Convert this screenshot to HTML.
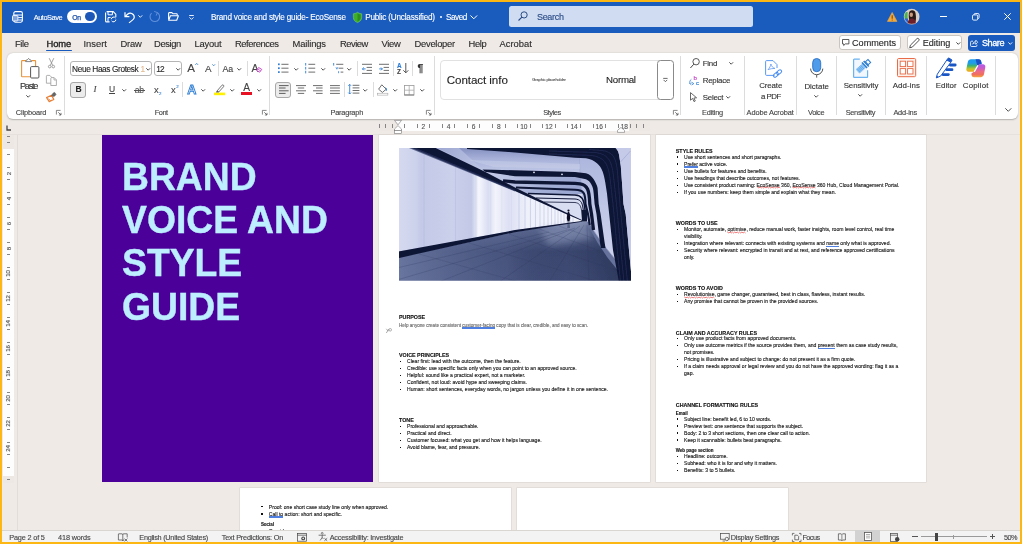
<!DOCTYPE html>
<html><head><meta charset="utf-8"><title>Word</title>
<style>
*{box-sizing:border-box;margin:0;padding:0}
html,body{width:1022px;height:544px;overflow:hidden;background:#FDB714;font-family:"Liberation Sans",sans-serif;color:#262626}
.a{position:absolute}
.t{position:absolute;white-space:pre;line-height:1;-webkit-text-stroke:0.120px}
svg{position:absolute;overflow:visible}
</style></head><body><div id="root" style="position:absolute;left:0;top:0;width:1022px;height:544px;will-change:transform">
<div class="a" style="left:2.00px;top:2.00px;width:1018.00px;height:540.00px;background:#EFEAE6;"></div>
<div class="a" style="left:2.00px;top:2.00px;width:1018.00px;height:30.70px;background:#1A5BBE;"></div>
<svg style="left:12.00px;top:10.50px;" width="11" height="12" viewBox="0 0 11 12"><rect x="1.8" y="0.6" width="8.6" height="10.6" rx="1.6" fill="none" stroke="#fff" stroke-width="1.1"/><path d="M2 4h8.4M6.2 6.6h4.2M6.2 9h4.2" stroke="#fff" stroke-width="1"/><rect x="0.5" y="4.6" width="5.4" height="5.400" rx="0.8" fill="#7FA3DD" stroke="#fff" stroke-width="0.900"/></svg>
<div class="t" style="left:33.70px;top:14.00px;font-size:7.40px;color:#fff;letter-spacing:-0.449px;">AutoSave</div>
<div class="a" style="left:67.00px;top:10.20px;width:30.00px;height:13.00px;background:#fff;border-radius:6.5px;"></div>
<div class="t" style="left:72.30px;top:15.00px;font-size:6.80px;color:#1A4FA8;letter-spacing:-0.436px;-webkit-text-stroke:0.250px #1A4FA8;">On</div>
<div class="a" style="left:85.30px;top:12.00px;width:9.40px;height:9.40px;background:#1D58B8;border-radius:50%;"></div>
<svg style="left:105.00px;top:11.00px;" width="11.5" height="11.5" viewBox="0 0 11.5 11.5"><path d="M1.6 0.6h6.6l2.6 2.6v3M0.6 1.6v8.3a1 1 0 0 0 1 1h3" fill="none" stroke="#fff" stroke-width="1.1"/><path d="M3 0.8v3h4.4v-3M3 10.6v-4h2.6" fill="none" stroke="#fff" stroke-width="1"/><path d="M6.3 8.2a2.4 2.4 0 0 1 4.3-1.2M10.9 8.6a2.4 2.4 0 0 1-4.3 1.3" fill="none" stroke="#fff" stroke-width="1"/></svg>
<svg style="left:124.00px;top:10.50px;" width="12" height="12" viewBox="0 0 12 12"><path d="M1 1.2v4.4h4.4" fill="none" stroke="#fff" stroke-width="1.2"/><path d="M1.4 5.2 3.6 3.2a4 4 0 0 1 6.6 3.6c-.4 1.8-2.6 3-5.2 5" fill="none" stroke="#fff" stroke-width="1.2"/></svg>
<svg style="left:138.40px;top:15.20px;" width="4.6" height="3" viewBox="0 0 4.6 3"><path d="M0.4 0.4l1.9 1.9 1.9-1.9" fill="none" stroke="#fff" stroke-width="0.9"/></svg>
<svg style="left:149.00px;top:10.80px;" width="11.5" height="11.5" viewBox="0 0 11.5 11.5"><path d="M8.2 1.6a4.8 4.8 0 1 1-5.6.6" fill="none" stroke="#5f8fda" stroke-width="1.1"/><path d="M5.2 0.4l3.2 1.2-1.2 3" fill="none" stroke="#5f8fda" stroke-width="1"/></svg>
<svg style="left:168.00px;top:12.20px;" width="11" height="9" viewBox="0 0 11 9"><path d="M0.6 7.6v-6.4a.6.6 0 0 1 .6-.6h2.6l1.2 1.2h3.6a.6.6 0 0 1 .6.6v1.2" fill="none" stroke="#fff" stroke-width="1.1"/><path d="M0.7 8.2l1.7-4.4h8l-1.7 4.4z" fill="none" stroke="#fff" stroke-width="1.1" stroke-linejoin="round"/></svg>
<svg style="left:188.60px;top:14.60px;" width="5" height="5" viewBox="0 0 5 5"><path d="M0.2 0.5h4.6" stroke="#fff" stroke-width="0.9"/><path d="M0.5 2.4l2 2 2-2" fill="none" stroke="#fff" stroke-width="0.9"/></svg>
<div class="t" style="left:211.00px;top:14.00px;font-size:8.20px;color:#fff;letter-spacing:-0.220px;">Brand voice and style guide- EcoSense</div>
<svg style="left:352.60px;top:11.80px;" width="9" height="10.8" viewBox="0 0 9 10.8"><path d="M4.5 0.3c1.3 1 2.7 1.4 4.2 1.5v3.6c0 2.6-1.8 4.3-4.2 5.2C2.1 9.700.3 8 .3 5.400V1.8C1.8 1.700 3.200 1.300 4.500.3z" fill="#3FAE2A" stroke="#7ED66B" stroke-width="0.5"/><path d="M4.5 1.6c1 .7 2 1 3.100 1.100v2.800c0 1.900-1.300 3.200-3.100 3.900z" fill="#2E8F1E"/></svg>
<div class="t" style="left:365.20px;top:14.00px;font-size:8.20px;color:#fff;letter-spacing:-0.213px;">Public (Unclassified)</div>
<div class="a" style="left:439.80px;top:16.20px;width:2.00px;height:2.00px;background:#fff;border-radius:50%;"></div>
<div class="t" style="left:446.00px;top:14.00px;font-size:8.20px;color:#fff;letter-spacing:-0.450px;">Saved</div>
<svg style="left:470.00px;top:14.60px;" width="7.6" height="4.6" viewBox="0 0 7.6 4.6"><path d="M0.5 0.5l3.300 3.300 3.300-3.300" fill="none" stroke="#fff" stroke-width="1"/></svg>
<div class="a" style="left:509.00px;top:6.00px;width:244.40px;height:20.80px;background:#CFDCF1;border-radius:2.500px;"></div>
<svg style="left:517.50px;top:11.40px;" width="10" height="10" viewBox="0 0 10 10"><circle cx="6.100" cy="3.900" r="3.100" fill="none" stroke="#2B4C86" stroke-width="1"/><path d="M3.900 6.100L0.500 9.500" stroke="#2B4C86" stroke-width="1.100"/></svg>
<div class="t" style="left:537.00px;top:13.00px;font-size:9.00px;color:#2B4C86;letter-spacing:-0.319px;">Search</div>
<svg style="left:887.00px;top:12.00px;" width="10.4" height="9.8" viewBox="0 0 10.4 9.8"><path d="M5.200.4L10 9.400H0.400z" fill="#F2A93B" stroke="#F2A93B" stroke-width="0.600" stroke-linejoin="round"/><path d="M5.200 3.200v3.600" stroke="#7a4a12" stroke-width="1.100"/><circle cx="5.200" cy="8" r="0.600" fill="#7a4a12"/></svg>
<svg style="left:904.00px;top:9.00px;" width="15.4" height="15.4" viewBox="0 0 15.4 15.4"><defs><clipPath id="av"><circle cx="7.700" cy="7.700" r="7.700"/></clipPath></defs><g clip-path="url(#av)"><rect width="15.400" height="15.400" fill="#D9CDBF"/><rect x="0" y="3" width="3.600" height="7" fill="#4CAF50"/><rect x="0" y="9.500" width="4" height="6" fill="#2E62C9"/><path d="M5.500 2.500c2-2 5.500-1.500 6 1.500c.4 2.500.8 5 .2 8l-3.500 1l-3-2c-.5-3-.8-6.500.3-8.500z" fill="#2a1a17"/><ellipse cx="7.300" cy="5.800" rx="1.700" ry="2.200" fill="#C99A7C"/><path d="M3.500 15.400c0-4 2-6 4.300-6s4.500 2 4.500 6z" fill="#6B1F2A"/></g><circle cx="7.700" cy="7.700" r="7.500" fill="none" stroke="#E9E2DA" stroke-width="0.500"/></svg>
<div class="a" style="left:940.00px;top:16.00px;width:7.20px;height:1.00px;background:#fff;"></div>
<svg style="left:972.00px;top:13.00px;" width="7.6" height="7.6" viewBox="0 0 7.6 7.6"><rect x="0.500" y="1.900" width="5.200" height="5.200" rx="1.200" fill="none" stroke="#fff" stroke-width="0.900"/><path d="M2 1.900v-.2a1.200 1.200 0 0 1 1.200-1.200h2.700a1.200 1.200 0 0 1 1.200 1.200v2.700a1.200 1.200 0 0 1-1.200 1.200h-.2" fill="none" stroke="#fff" stroke-width="0.900"/></svg>
<svg style="left:1004.00px;top:13.20px;" width="7" height="7" viewBox="0 0 7 7"><path d="M0.300.3l6.400 6.400M6.700.3L.3 6.700" stroke="#fff" stroke-width="1"/></svg>
<div class="t" style="left:15.00px;top:39.00px;font-size:9.40px;color:#2b2b2b;letter-spacing:-0.412px;">File</div>
<div class="t" style="left:83.50px;top:39.00px;font-size:9.40px;color:#2b2b2b;letter-spacing:-0.002px;">Insert</div>
<div class="t" style="left:120.50px;top:39.00px;font-size:9.40px;color:#2b2b2b;letter-spacing:-0.234px;">Draw</div>
<div class="t" style="left:154.00px;top:39.00px;font-size:9.40px;color:#2b2b2b;letter-spacing:-0.377px;">Design</div>
<div class="t" style="left:194.50px;top:39.00px;font-size:9.40px;color:#2b2b2b;letter-spacing:-0.204px;">Layout</div>
<div class="t" style="left:235.00px;top:39.00px;font-size:9.40px;color:#2b2b2b;letter-spacing:-0.457px;">References</div>
<div class="t" style="left:292.50px;top:39.00px;font-size:9.40px;color:#2b2b2b;letter-spacing:-0.122px;">Mailings</div>
<div class="t" style="left:340.00px;top:39.00px;font-size:9.40px;color:#2b2b2b;letter-spacing:-0.470px;">Review</div>
<div class="t" style="left:381.50px;top:39.00px;font-size:9.40px;color:#2b2b2b;letter-spacing:-0.301px;">View</div>
<div class="t" style="left:414.50px;top:39.00px;font-size:9.40px;color:#2b2b2b;letter-spacing:-0.261px;">Developer</div>
<div class="t" style="left:468.50px;top:39.00px;font-size:9.40px;color:#2b2b2b;letter-spacing:-0.333px;">Help</div>
<div class="t" style="left:499.50px;top:39.00px;font-size:9.40px;color:#2b2b2b;letter-spacing:0.015px;">Acrobat</div>
<div class="t" style="left:46.60px;top:39.00px;font-size:9.40px;color:#1f1f1f;letter-spacing:-0.119px;-webkit-text-stroke:0.350px #1f1f1f;">Home</div>
<div class="a" style="left:46.00px;top:49.90px;width:26.00px;height:1.50px;background:#185ABD;border-radius:1px;"></div>
<div class="a" style="left:838.50px;top:35.30px;width:62.00px;height:15.20px;background:#fff;border:0.800px solid #c9c5c1;border-radius:3px;"></div>
<svg style="left:842.00px;top:39.00px;" width="7.6" height="7.2" viewBox="0 0 7.6 7.2"><path d="M0.500.5h6.400v4.400h-3.600l-1.600 1.600v-1.600h-1.200z" fill="none" stroke="#333" stroke-width="0.800" stroke-linejoin="round"/></svg>
<div class="t" style="left:852.00px;top:39.00px;font-size:9.10px;color:#262626;letter-spacing:0.001px;">Comments</div>
<div class="a" style="left:906.50px;top:35.30px;width:55.00px;height:15.20px;background:#fff;border:0.800px solid #c9c5c1;border-radius:3px;"></div>
<svg style="left:909.40px;top:38.00px;" width="10.5" height="10" viewBox="0 0 10.5 10"><path d="M7.800.8a1.300 1.300 0 0 1 1.900 1.900l-6.400 6.400-2.600.700.700-2.600z" fill="none" stroke="#333" stroke-width="0.850" stroke-linejoin="round"/></svg>
<div class="t" style="left:922.80px;top:39.00px;font-size:9.10px;color:#262626;letter-spacing:-0.032px;">Editing</div>
<svg style="left:955.50px;top:41.60px;" width="4.6" height="3" viewBox="0 0 4.6 3"><path d="M0.400.4l1.900 1.900 1.900-1.900" fill="none" stroke="#333" stroke-width="0.900"/></svg>
<div class="a" style="left:967.50px;top:35.10px;width:47.50px;height:15.50px;background:#185ABD;border-radius:3px;"></div>
<svg style="left:970.40px;top:38.60px;" width="8" height="8" viewBox="0 0 8 8"><path d="M3 2.200h-1.400a1 1 0 0 0-1 1v3.300a1 1 0 0 0 1 1h4.300a1 1 0 0 0 1-1v-.800" fill="none" stroke="#fff" stroke-width="0.850"/><path d="M2.800 5.200c.2-1.700 1.200-2.600 3-2.600v-1.500l1.900 2.100-1.900 2.100v-1.400c-1.300-.100-2.200.300-3 1.300z" fill="none" stroke="#fff" stroke-width="0.750" stroke-linejoin="round"/></svg>
<div class="t" style="left:982.00px;top:39.00px;font-size:9.10px;color:#fff;letter-spacing:-0.457px;-webkit-text-stroke:0.300px #fff;">Share</div>
<svg style="left:1008.40px;top:41.60px;" width="4.6" height="3" viewBox="0 0 4.6 3"><path d="M0.400.4l1.900 1.900 1.900-1.900" fill="none" stroke="#fff" stroke-width="0.900"/></svg>
<div class="a" style="left:7.00px;top:52.80px;width:1010.60px;height:66.00px;background:#fff;border-radius:6px;box-shadow:0 0.500px 1.500px rgba(0,0,0,.25);"></div>
<svg style="left:21.00px;top:58.00px;" width="19" height="21" viewBox="0 0 19 21"><path d="M5 2.600H1.200a.6.600 0 0 0-.600.600V18.200a.600.600 0 0 0 .600.600H9" fill="none" stroke="#E8953A" stroke-width="1.100"/><path d="M10.400 2.600H14a.600.600 0 0 1 .600.600V8" fill="none" stroke="#E8953A" stroke-width="1.100"/><path d="M4.600 3.600L5.600 1.800H6.400L7.600.400L8.800 1.800H9.600L10.600 3.600z" fill="#fff" stroke="#666" stroke-width="0.800" stroke-linejoin="round"/><rect x="9.600" y="8.600" width="8.300" height="11.400" rx="1" fill="#fff" stroke="#555" stroke-width="1"/></svg>
<div class="t" style="left:19.90px;top:82.00px;font-size:9.20px;color:#333;letter-spacing:-1.225px;">Paste</div>
<svg style="left:25.80px;top:95.00px;" width="4.4" height="2.2" viewBox="0 0 4.4 2.2"><path d="M0.300 0.300L2.2 2.2L4.1 0.300" fill="none" stroke="#444" stroke-width="0.950"/></svg>
<svg style="left:48.00px;top:58.20px;" width="7" height="10.4" viewBox="0 0 7 10.4"><path d="M1.200.2L4.600 7.200M5.800.2L2.400 7.200" stroke="#8a8a8a" stroke-width="0.800" fill="none"/><circle cx="1.700" cy="8.600" r="1.300" fill="none" stroke="#8a8a8a" stroke-width="0.800"/><circle cx="5.300" cy="8.600" r="1.300" fill="none" stroke="#8a8a8a" stroke-width="0.800"/></svg>
<svg style="left:45.90px;top:74.60px;" width="11" height="11" viewBox="0 0 11 11"><path d="M0.400 8.200V1.200a.800.800 0 0 1 .800-.800H3.800L5.600 2.200V8.200z" fill="#fff" stroke="#9a9a9a" stroke-width="0.800"/><path d="M4.800 10.500V3.400a.800.800 0 0 1 .800-.800H8.200L10.400 4.800V10.500z" fill="#fff" stroke="#9a9a9a" stroke-width="0.800"/><path d="M8 2.800V5h2.200" fill="none" stroke="#9a9a9a" stroke-width="0.700"/></svg>
<svg style="left:46.30px;top:91.70px;" width="10.5" height="10" viewBox="0 0 10.5 10"><path d="M0.600 5.600L5.400 3.200L7.800 7.400L3.200 9.600z" fill="#fff" stroke="#E8813A" stroke-width="1.200" stroke-linejoin="round"/><path d="M2.400 6.800l2.400 2" stroke="#E8813A" stroke-width="0.900"/><path d="M5.600 3.600L7 1.200L8.600.400L10 2.400L9 3.800L7.600 4.600z" fill="#666" stroke="#555" stroke-width="0.600"/></svg>
<div class="t" style="left:15.80px;top:109.00px;font-size:7.40px;color:#444;letter-spacing:-0.130px;">Clipboard</div>
<svg style="left:56.40px;top:110.20px;" width="5.6" height="5.2" viewBox="0 0 5.6 5.2"><path d="M0.400 4.600V0.400H4.600" fill="none" stroke="#555" stroke-width="0.700"/><path d="M2.300 2.300L5 5M5 5V2.900M5 5H2.900" fill="none" stroke="#555" stroke-width="0.800"/></svg>
<div class="a" style="left:64.10px;top:56.00px;width:0.70px;height:59.00px;background:#dcdcdc;"></div>
<div class="a" style="left:69.90px;top:60.50px;width:82.30px;height:15.90px;background:#fff;border:0.800px solid #b5b5b5;border-radius:3px;"></div>
<div class="t" style="left:72.10px;top:65.00px;font-size:8.30px;color:#262626;letter-spacing:-0.388px;">Neue Haas Grotesk</div>
<div class="t" style="left:140.60px;top:65.00px;font-size:8.30px;color:#e3b98f;">1</div>
<svg style="left:146.30px;top:67.60px;" width="4.4" height="2.2" viewBox="0 0 4.4 2.2"><path d="M0.300 0.300L2.2 2.2L4.1 0.300" fill="none" stroke="#444" stroke-width="0.950"/></svg>
<div class="a" style="left:154.20px;top:60.50px;width:28.10px;height:15.90px;background:#fff;border:0.800px solid #b5b5b5;border-radius:3px;"></div>
<div class="t" style="left:156.20px;top:65.00px;font-size:8.30px;color:#262626;letter-spacing:-0.916px;">12</div>
<svg style="left:176.40px;top:67.60px;" width="4.4" height="2.2" viewBox="0 0 4.4 2.2"><path d="M0.300 0.300L2.2 2.2L4.1 0.300" fill="none" stroke="#444" stroke-width="0.950"/></svg>
<div class="t" style="left:187.30px;top:62.00px;font-size:11.60px;color:#444;">A</div>
<svg style="left:195.30px;top:63.40px;" width="3.4" height="2.2" viewBox="0 0 3.4 2.2"><path d="M0.300 1.900L1.700.400L3.100 1.900" fill="none" stroke="#2B7CD3" stroke-width="0.800"/></svg>
<div class="t" style="left:205.00px;top:64.00px;font-size:9.80px;color:#444;">A</div>
<svg style="left:212.30px;top:64.40px;" width="3.4" height="2.2" viewBox="0 0 3.4 2.2"><path d="M0.300.300L1.700 1.800L3.100.300" fill="none" stroke="#2B7CD3" stroke-width="0.800"/></svg>
<div class="a" style="left:218.10px;top:61.00px;width:0.70px;height:15.00px;background:#dcdcdc;"></div>
<div class="t" style="left:222.50px;top:65.00px;font-size:8.80px;color:#444;letter-spacing:-0.132px;">Aa</div>
<svg style="left:236.70px;top:67.60px;" width="4.4" height="2.2" viewBox="0 0 4.4 2.2"><path d="M0.300 0.300L2.2 2.2L4.1 0.300" fill="none" stroke="#444" stroke-width="0.950"/></svg>
<div class="a" style="left:247.10px;top:61.00px;width:0.70px;height:15.00px;background:#dcdcdc;"></div>
<div class="t" style="left:251.60px;top:63.00px;font-size:10.60px;color:#444;">A</div>
<svg style="left:256.20px;top:66.50px;" width="6.4" height="5.6" viewBox="0 0 6.4 5.6"><path d="M2.600.500L5.800 2.400L3.600 5.200L.600 3.400z" fill="#fff" stroke="#C43BC4" stroke-width="0.900" stroke-linejoin="round"/><path d="M1.600 2L4.600 3.800" stroke="#C43BC4" stroke-width="0.700"/></svg>
<div class="a" style="left:69.90px;top:81.50px;width:16.20px;height:16.10px;background:#ECECEC;border:0.800px solid #a8a8a8;border-radius:3px;"></div>
<div class="t" style="left:75.60px;top:85.00px;font-size:8.50px;color:#222;font-weight:bold;">B</div>
<div class="t" style="left:93.40px;top:85.00px;font-size:9.00px;color:#444;font-style:italic;font-family:'Liberation Serif',serif;">I</div>
<div class="t" style="left:108.90px;top:85.00px;font-size:8.50px;color:#444;">U</div>
<div class="a" style="left:108.70px;top:93.00px;width:6.30px;height:0.80px;background:#444;"></div>
<svg style="left:121.80px;top:88.60px;" width="4.4" height="2.2" viewBox="0 0 4.4 2.2"><path d="M0.300 0.300L2.2 2.2L4.1 0.300" fill="none" stroke="#444" stroke-width="0.950"/></svg>
<div class="t" style="left:134.80px;top:86.00px;font-size:8.60px;color:#555;letter-spacing:-0.283px;">ab</div>
<div class="a" style="left:133.80px;top:90.00px;width:10.80px;height:0.80px;background:#555;"></div>
<div class="t" style="left:154.00px;top:85.00px;font-size:9.40px;color:#444;">x</div>
<div class="t" style="left:159.00px;top:92.00px;font-size:4.40px;color:#2B7CD3;">2</div>
<div class="t" style="left:171.00px;top:85.00px;font-size:9.40px;color:#444;">x</div>
<div class="t" style="left:176.20px;top:85.00px;font-size:4.40px;color:#2B7CD3;">2</div>
<div class="a" style="left:182.40px;top:82.40px;width:0.70px;height:14.80px;background:#dcdcdc;"></div>
<div class="t" style="left:187.20px;top:84.00px;font-size:12.60px;color:#fff;font-weight:bold;-webkit-text-stroke:0.850px #2B7CD3;">A</div>
<svg style="left:201.10px;top:88.60px;" width="4.4" height="2.2" viewBox="0 0 4.4 2.2"><path d="M0.300 0.300L2.2 2.2L4.1 0.300" fill="none" stroke="#444" stroke-width="0.950"/></svg>
<svg style="left:214.00px;top:83.50px;" width="11.4" height="11.4" viewBox="0 0 11.4 11.4"><rect x="0" y="8.600" width="11.200" height="2.600" fill="#FFF100"/><path d="M3.200 6.800L8 1.200a1.100 1.100 0 0 1 1.600 1.500L4.800 8z" fill="#fff" stroke="#555" stroke-width="0.800" stroke-linejoin="round"/><path d="M3.200 6.800L2.400 8.200L4.800 8" fill="#555" stroke="#555" stroke-width="0.600"/></svg>
<svg style="left:229.80px;top:88.60px;" width="4.4" height="2.2" viewBox="0 0 4.4 2.2"><path d="M0.300 0.300L2.2 2.2L4.1 0.300" fill="none" stroke="#444" stroke-width="0.950"/></svg>
<div class="t" style="left:243.20px;top:83.00px;font-size:10.20px;color:#444;">A</div>
<div class="a" style="left:241.00px;top:92.10px;width:11.00px;height:2.60px;background:#E81123;"></div>
<svg style="left:256.80px;top:88.60px;" width="4.4" height="2.2" viewBox="0 0 4.4 2.2"><path d="M0.300 0.300L2.2 2.2L4.1 0.300" fill="none" stroke="#444" stroke-width="0.950"/></svg>
<div class="t" style="left:154.70px;top:109.00px;font-size:7.40px;color:#444;letter-spacing:-0.452px;">Font</div>
<svg style="left:262.20px;top:110.20px;" width="5.6" height="5.2" viewBox="0 0 5.6 5.2"><path d="M0.400 4.600V0.400H4.600" fill="none" stroke="#555" stroke-width="0.700"/><path d="M2.300 2.300L5 5M5 5V2.900M5 5H2.900" fill="none" stroke="#555" stroke-width="0.800"/></svg>
<div class="a" style="left:269.20px;top:56.00px;width:0.70px;height:59.00px;background:#dcdcdc;"></div>
<svg style="left:277.80px;top:63.00px;" width="11" height="11" viewBox="0 0 11 11"><rect x="0" y="0.45" width="1.700" height="1.700" fill="#2B7CD3"/><path d="M3.400 1.3H10.500" stroke="#666" stroke-width="0.950"/><rect x="0" y="4.35" width="1.700" height="1.700" fill="#2B7CD3"/><path d="M3.400 5.2H10.500" stroke="#666" stroke-width="0.950"/><rect x="0" y="8.25" width="1.700" height="1.700" fill="#2B7CD3"/><path d="M3.400 9.1H10.500" stroke="#666" stroke-width="0.950"/></svg>
<svg style="left:293.60px;top:67.60px;" width="4.4" height="2.2" viewBox="0 0 4.4 2.2"><path d="M0.300 0.300L2.2 2.2L4.1 0.300" fill="none" stroke="#444" stroke-width="0.950"/></svg>
<svg style="left:305.20px;top:63.00px;" width="11" height="11" viewBox="0 0 11 11"><path d="M0.700 0V2.6" stroke="#2B7CD3" stroke-width="0.900"/><path d="M3.400 1.3H10.200" stroke="#666" stroke-width="0.950"/><path d="M0.700 3.9V6.5" stroke="#2B7CD3" stroke-width="0.900"/><path d="M3.400 5.2H10.200" stroke="#666" stroke-width="0.950"/><path d="M0.700 7.8V10.4" stroke="#2B7CD3" stroke-width="0.900"/><path d="M3.400 9.1H10.200" stroke="#666" stroke-width="0.950"/></svg>
<svg style="left:320.80px;top:67.60px;" width="4.4" height="2.2" viewBox="0 0 4.4 2.2"><path d="M0.300 0.300L2.2 2.2L4.1 0.300" fill="none" stroke="#444" stroke-width="0.950"/></svg>
<svg style="left:332.50px;top:63.00px;" width="11" height="11" viewBox="0 0 11 11"><path d="M0.700 0V2.600" stroke="#2B7CD3" stroke-width="0.900"/><path d="M3.200 1.300H10.300M5.600 5.200H10.300M7.600 9.100H10.300" stroke="#666" stroke-width="0.950"/><path d="M3 4.200l.900 2M4.800 4.200L3.900 6.200" stroke="#2B7CD3" stroke-width="0.700" fill="none"/><path d="M5.600 8.200v2" stroke="#2B7CD3" stroke-width="0.800"/></svg>
<svg style="left:347.10px;top:67.60px;" width="4.4" height="2.2" viewBox="0 0 4.4 2.2"><path d="M0.300 0.300L2.2 2.2L4.1 0.300" fill="none" stroke="#444" stroke-width="0.950"/></svg>
<div class="a" style="left:357.20px;top:61.00px;width:0.70px;height:15.00px;background:#dcdcdc;"></div>
<svg style="left:362.00px;top:63.00px;" width="10" height="11" viewBox="0 0 10 11"><path d="M0 1.300H10M4.600 4.400H10M4.600 7.400H10M0 10.400H10" stroke="#666" stroke-width="0.950" /><path d="M3.600 5.900H0.400M1.800 4.500L.400 5.900L1.800 7.300" stroke="#2B7CD3" stroke-width="0.900" fill="none"/></svg>
<svg style="left:379.10px;top:63.00px;" width="10" height="11" viewBox="0 0 10 11"><path d="M0 1.300H10M4.600 4.400H10M4.600 7.400H10M0 10.400H10" stroke="#666" stroke-width="0.950" /><path d="M0.200 5.900H3.400M2 4.500L3.400 5.900L2 7.300" stroke="#2B7CD3" stroke-width="0.900" fill="none"/></svg>
<div class="a" style="left:393.20px;top:61.00px;width:0.70px;height:15.00px;background:#dcdcdc;"></div>
<div class="t" style="left:396.90px;top:63.00px;font-size:6.40px;color:#2B7CD3;font-weight:bold;">A</div>
<div class="t" style="left:397.10px;top:69.00px;font-size:6.40px;color:#444;font-weight:bold;">Z</div>
<svg style="left:402.60px;top:63.40px;" width="6" height="10.5" viewBox="0 0 6 10.5"><path d="M2.800 0V9.800M0.300 7.300L2.800 9.800L5.300 7.300" fill="none" stroke="#444" stroke-width="0.900"/></svg>
<div class="a" style="left:411.70px;top:61.00px;width:0.70px;height:15.00px;background:#dcdcdc;"></div>
<div class="t" style="left:417.60px;top:63.00px;font-size:10.50px;color:#333;font-weight:bold;">¶</div>
<div class="a" style="left:275.30px;top:81.50px;width:16.20px;height:16.10px;background:#ECECEC;border:0.800px solid #a8a8a8;border-radius:3px;"></div>
<svg style="left:278.70px;top:85.00px;" width="10" height="9" viewBox="0 0 10 9"><path d="M0 .600H9.600M0 3H6.600M0 5.800H9.600M0 8.400H6.600" stroke="#555" stroke-width="0.950"/></svg>
<svg style="left:295.60px;top:85.00px;" width="10" height="9" viewBox="0 0 10 9"><path d="M0 .600H10M1.800 3H8.200M0 5.800H10M1.800 8.400H8.200" stroke="#666" stroke-width="0.950"/></svg>
<svg style="left:312.70px;top:85.00px;" width="10" height="9" viewBox="0 0 10 9"><path d="M0 .600H9.600M3 3H9.600M0 5.800H9.600M3 8.400H9.600" stroke="#666" stroke-width="0.950"/></svg>
<svg style="left:329.80px;top:85.00px;" width="10" height="9" viewBox="0 0 10 9"><path d="M0 .600H9.900M0 3H9.900M0 5.800H9.900M0 8.400H9.900" stroke="#666" stroke-width="0.950"/></svg>
<div class="a" style="left:343.50px;top:82.40px;width:0.70px;height:14.80px;background:#dcdcdc;"></div>
<svg style="left:347.60px;top:84.30px;" width="11.5" height="10.5" viewBox="0 0 11.5 10.5"><path d="M4.600 1.300H11.400M4.600 3.900H11.400M4.600 6.500H11.400M4.600 9.100H11.400" stroke="#666" stroke-width="0.950"/><path d="M1.700.400V10M.300 1.800L1.700.400L3.100 1.800M.300 8.600L1.700 10L3.100 8.600" fill="none" stroke="#2B7CD3" stroke-width="0.850"/></svg>
<svg style="left:362.50px;top:88.60px;" width="4.4" height="2.2" viewBox="0 0 4.4 2.2"><path d="M0.300 0.300L2.2 2.2L4.1 0.300" fill="none" stroke="#444" stroke-width="0.950"/></svg>
<div class="a" style="left:372.70px;top:82.40px;width:0.70px;height:14.80px;background:#dcdcdc;"></div>
<svg style="left:377.00px;top:83.80px;" width="11.5" height="11.5" viewBox="0 0 11.5 11.5"><path d="M4.800.800L9.200 5.200L5.400 8.400L1.600 5.200z" fill="#fff" stroke="#555" stroke-width="0.850" stroke-linejoin="round"/><path d="M8.600 3.600c1 1 1.200 2 .600 3.200" stroke="#2B7CD3" stroke-width="1" fill="none"/><rect x="0.300" y="9.200" width="10.600" height="1.900" fill="#fff" stroke="#999" stroke-width="0.500"/></svg>
<svg style="left:392.60px;top:88.60px;" width="4.4" height="2.2" viewBox="0 0 4.4 2.2"><path d="M0.300 0.300L2.2 2.2L4.1 0.300" fill="none" stroke="#444" stroke-width="0.950"/></svg>
<svg style="left:404.40px;top:84.50px;" width="10.4" height="10.4" viewBox="0 0 10.4 10.4"><rect x="0.400" y="0.400" width="9.600" height="9.600" fill="none" stroke="#999" stroke-width="0.800"/><path d="M5.200.400V10M.400 5.200H10" stroke="#aaa" stroke-width="0.800"/><path d="M0.400 10H10" stroke="#777" stroke-width="0.900"/></svg>
<svg style="left:419.80px;top:88.60px;" width="4.4" height="2.2" viewBox="0 0 4.4 2.2"><path d="M0.300 0.300L2.2 2.2L4.1 0.300" fill="none" stroke="#444" stroke-width="0.950"/></svg>
<div class="t" style="left:330.50px;top:109.00px;font-size:7.40px;color:#444;letter-spacing:-0.218px;">Paragraph</div>
<svg style="left:426.30px;top:110.20px;" width="5.6" height="5.2" viewBox="0 0 5.6 5.2"><path d="M0.400 4.600V0.400H4.600" fill="none" stroke="#555" stroke-width="0.700"/><path d="M2.300 2.300L5 5M5 5V2.900M5 5H2.900" fill="none" stroke="#555" stroke-width="0.800"/></svg>
<div class="a" style="left:434.20px;top:56.00px;width:0.70px;height:59.00px;background:#dcdcdc;"></div>
<div class="a" style="left:440.40px;top:60.20px;width:234.00px;height:40.00px;background:#fff;border:0.800px solid #e1e1e1;border-radius:4px;"></div>
<div class="a" style="left:657.10px;top:60.20px;width:17.00px;height:40.00px;background:#fff;border:0.900px solid #8a8a8a;border-radius:3.500px;"></div>
<div class="t" style="left:446.80px;top:74.00px;font-size:11.60px;color:#1f1f1f;letter-spacing:-0.075px;">Contact info</div>
<div class="t" style="left:532.30px;top:78.00px;font-size:3.90px;color:#555;letter-spacing:-0.069px;">Graphic placeholder</div>
<div class="t" style="left:606.00px;top:75.00px;font-size:9.70px;color:#1f1f1f;letter-spacing:-0.243px;">Normal</div>
<svg style="left:663.00px;top:77.60px;" width="4.8" height="4.2" viewBox="0 0 4.8 4.2"><path d="M0.200.400H4.600" stroke="#444" stroke-width="0.800"/><path d="M0.600 1.900L2.400 3.700L4.200 1.900" fill="none" stroke="#444" stroke-width="0.800"/></svg>
<div class="t" style="left:543.30px;top:109.00px;font-size:7.40px;color:#444;letter-spacing:-0.459px;">Styles</div>
<svg style="left:673.00px;top:110.20px;" width="5.6" height="5.2" viewBox="0 0 5.6 5.2"><path d="M0.400 4.600V0.400H4.600" fill="none" stroke="#555" stroke-width="0.700"/><path d="M2.300 2.300L5 5M5 5V2.900M5 5H2.900" fill="none" stroke="#555" stroke-width="0.800"/></svg>
<div class="a" style="left:680.10px;top:56.00px;width:0.70px;height:59.00px;background:#dcdcdc;"></div>
<svg style="left:689.70px;top:57.50px;" width="10" height="10.5" viewBox="0 0 10 10.5"><circle cx="6.100" cy="3.700" r="3.200" fill="none" stroke="#444" stroke-width="0.900"/><path d="M3.800 6.200L.400 10" stroke="#444" stroke-width="1"/></svg>
<div class="t" style="left:702.70px;top:60.00px;font-size:7.90px;color:#333;letter-spacing:-0.242px;">Find</div>
<svg style="left:729.00px;top:62.30px;" width="4.4" height="2.2" viewBox="0 0 4.4 2.2"><path d="M0.300 0.300L2.2 2.2L4.1 0.300" fill="none" stroke="#444" stroke-width="0.950"/></svg>
<div class="t" style="left:693.40px;top:75.00px;font-size:6.20px;color:#C43BC4;">b</div>
<div class="t" style="left:695.90px;top:80.00px;font-size:6.20px;color:#2B7CD3;">c</div>
<svg style="left:689.00px;top:78.80px;" width="5.5" height="7" viewBox="0 0 5.5 7"><path d="M2.400.300C.800 1.300.300 3 1.300 4.800M.200 4L1.400 5.200L2.600 4M2.600 3.200L4.800 4.600L2.600 6" fill="none" stroke="#2B7CD3" stroke-width="0.800"/></svg>
<div class="t" style="left:702.70px;top:77.00px;font-size:7.90px;color:#333;letter-spacing:-0.226px;">Replace</div>
<svg style="left:690.00px;top:92.00px;" width="7.6" height="10.2" viewBox="0 0 7.6 10.2"><path d="M0.500.600V8.200L2.600 6.400L4 9.600L5.300 9L3.900 6L6.600 5.800z" fill="#fff" stroke="#444" stroke-width="0.800" stroke-linejoin="round"/></svg>
<div class="t" style="left:702.70px;top:94.00px;font-size:7.90px;color:#333;letter-spacing:-0.226px;">Select</div>
<svg style="left:725.90px;top:95.60px;" width="4.4" height="2.2" viewBox="0 0 4.4 2.2"><path d="M0.300 0.300L2.2 2.2L4.1 0.300" fill="none" stroke="#444" stroke-width="0.950"/></svg>
<div class="t" style="left:702.00px;top:109.00px;font-size:7.40px;color:#444;letter-spacing:-0.232px;">Editing</div>
<div class="a" style="left:744.20px;top:56.00px;width:0.70px;height:59.00px;background:#dcdcdc;"></div>
<svg style="left:764.80px;top:60.00px;" width="17" height="18.5" viewBox="0 0 17 18.5"><path d="M9.600 15.400H1.600a1 1 0 0 1-1-1V1.600a1 1 0 0 1 1-1H8L12 4.600V8" fill="none" stroke="#4A8DF0" stroke-width="0.900"/><path d="M3 9.600c1.600-1.600 2.600-3.600 2.900-5.600c.6 2.400 2 3.800 4 4.400c-2.400 0-4.600.400-6.900 1.200z" fill="none" stroke="#4A8DF0" stroke-width="0.700" stroke-linejoin="round"/><g transform="rotate(-40 12.500 13.500)" fill="none" stroke="#4A8DF0" stroke-width="1"><rect x="7.600" y="11.900" width="5.600" height="3.200" rx="1.600"/><rect x="11.800" y="11.900" width="5.600" height="3.200" rx="1.600"/></g></svg>
<div class="t" style="left:759.20px;top:82.00px;font-size:7.90px;color:#333;letter-spacing:-0.119px;">Create</div>
<div class="t" style="left:761.00px;top:93.00px;font-size:7.90px;color:#333;letter-spacing:-0.518px;">a PDF</div>
<div class="t" style="left:746.60px;top:109.00px;font-size:7.40px;color:#444;letter-spacing:-0.111px;">Adobe Acrobat</div>
<div class="a" style="left:796.40px;top:56.00px;width:0.70px;height:59.00px;background:#dcdcdc;"></div>
<svg style="left:810.00px;top:57.60px;" width="14" height="20" viewBox="0 0 14 20"><rect x="2.700" y="0.500" width="8" height="13.200" rx="4" fill="#4F9CEB" stroke="#2B6FC4" stroke-width="0.900"/><path d="M0.600 10.600a6.100 6.100 0 0 0 12.200 0M6.700 16.800V19.600" fill="none" stroke="#555" stroke-width="1"/></svg>
<div class="t" style="left:804.40px;top:83.00px;font-size:7.90px;color:#333;letter-spacing:0.002px;">Dictate</div>
<svg style="left:814.10px;top:95.00px;" width="4.4" height="2.2" viewBox="0 0 4.4 2.2"><path d="M0.300 0.300L2.2 2.2L4.1 0.300" fill="none" stroke="#444" stroke-width="0.950"/></svg>
<div class="t" style="left:808.10px;top:109.00px;font-size:7.40px;color:#444;letter-spacing:-0.421px;">Voice</div>
<div class="a" style="left:836.10px;top:56.00px;width:0.70px;height:59.00px;background:#dcdcdc;"></div>
<svg style="left:853.30px;top:57.50px;" width="18.5" height="20" viewBox="0 0 18.5 20"><path d="M6.800 1.200H1.200a.600.600 0 0 0-.600.600V18.800a.600.600 0 0 0 .600.600H14a.600.600 0 0 0 .600-.600V12.200" fill="#F2F7FD" stroke="#6BB2F0" stroke-width="1.200"/><g transform="rotate(-42 10 8.500)"><rect x="2.600" y="6" width="8.600" height="5.200" fill="#8CC4F4"/><path d="M4.200 6V11.200M5.800 6V11.200M7.400 6V11.200M9 6V11.200" stroke="#4A9BE8" stroke-width="0.600"/><rect x="11.200" y="4.800" width="1.500" height="7.600" fill="#2B7CD3"/><rect x="13.500" y="4.800" width="1.500" height="7.600" fill="#2B7CD3"/><rect x="15" y="6.600" width="3.400" height="4" fill="#fff" stroke="#2B7CD3" stroke-width="1"/></g></svg>
<div class="t" style="left:843.70px;top:82.00px;font-size:7.90px;color:#333;letter-spacing:-0.078px;">Sensitivity</div>
<svg style="left:858.30px;top:94.10px;" width="4.4" height="2.2" viewBox="0 0 4.4 2.2"><path d="M0.300 0.300L2.2 2.2L4.1 0.300" fill="none" stroke="#444" stroke-width="0.950"/></svg>
<div class="t" style="left:845.80px;top:109.00px;font-size:7.40px;color:#444;letter-spacing:-0.356px;">Sensitivity</div>
<div class="a" style="left:885.00px;top:56.00px;width:0.70px;height:59.00px;background:#dcdcdc;"></div>
<svg style="left:896.70px;top:58.20px;" width="19.2" height="19.2" viewBox="0 0 19.2 19.2"><rect x="0.500" y="0.500" width="18.200" height="18.200" rx="1.200" fill="#FDF1EC" stroke="#E86A45" stroke-width="1"/><rect x="3.200" y="3.200" width="5.400" height="5.400" fill="#fff" stroke="#E86A45" stroke-width="0.900"/><rect x="10.600" y="3.200" width="5.400" height="5.400" fill="#fff" stroke="#E86A45" stroke-width="0.900"/><rect x="3.200" y="10.600" width="5.400" height="5.400" fill="#fff" stroke="#E86A45" stroke-width="0.900"/><rect x="10.600" y="10.600" width="5.400" height="5.400" fill="#fff" stroke="#E86A45" stroke-width="0.900"/></svg>
<div class="t" style="left:892.70px;top:82.00px;font-size:7.90px;color:#333;letter-spacing:0.073px;">Add-ins</div>
<div class="t" style="left:893.40px;top:109.00px;font-size:7.40px;color:#444;letter-spacing:-0.213px;">Add-ins</div>
<div class="a" style="left:926.20px;top:56.00px;width:0.70px;height:59.00px;background:#dcdcdc;"></div>
<svg style="left:935.70px;top:57.80px;" width="20.5" height="20" viewBox="0 0 20.5 20"><path d="M14.300 7H19.200M10.700 11.700H16M6.900 16.600H12.400" stroke="#1A56C4" stroke-width="2.800" stroke-linecap="round"/><path d="M0.300 19.900L1.300 16.200L11.900.400L12.900 0L16 2.100L15.600 3.200L4.600 18.100z" fill="#fff" stroke="#1A56C4" stroke-width="1" stroke-linejoin="round"/><path d="M11.900.400L12.900 0L16 2.100L14.400 4.400L10.500 2.400z" fill="#1A56C4"/><path d="M0.300 19.900L0.900 17.600L2.600 18.900z" fill="#1A56C4"/></svg>
<div class="t" style="left:935.70px;top:82.00px;font-size:7.90px;color:#333;letter-spacing:0.060px;">Editor</div>
<svg style="left:965.50px;top:58.70px;" width="19.7" height="18.5" viewBox="0 0 19.7 18.5"><defs><linearGradient id="cpL" x1="0" y1="0" x2="0" y2="1"><stop offset="0" stop-color="#1E9BEA"/><stop offset="0.300" stop-color="#1E9BEA"/><stop offset="0.520" stop-color="#3BB273"/><stop offset="0.780" stop-color="#C9C526"/><stop offset="1" stop-color="#F2A51E"/></linearGradient><linearGradient id="cpR" x1="0" y1="0" x2="0" y2="1"><stop offset="0" stop-color="#B35CEB"/><stop offset="0.300" stop-color="#C95BC6"/><stop offset="0.550" stop-color="#EC6A86"/><stop offset="0.800" stop-color="#F0705A"/><stop offset="1" stop-color="#F4A640"/></linearGradient></defs><path d="M5 .300H12.600C14 .300 14.700 1 15.100 2.200L15.800 4.600L11.600 6.600L8.300 12.700H2.600C1 12.700 0 11.500.400 9.800L1.800 3C2.200 1.200 3.400.300 5 .300z" fill="url(#cpL)"/><path d="M9.600.300H12.600C14 .300 14.700 1 15.100 2.200L15.800 5.200L13.400 5.400L11.400 7z" fill="#1B50C8"/><path d="M13.400 5.300H16.900C18.700 5.300 19.700 6.600 19.300 8.400L18 15.300C17.600 17.100 16.400 18.200 14.700 18.200H8C6.600 18.200 5.900 17.500 5.600 16.300L5.400 14.400L8.600 12.300L11.700 6.500z" fill="url(#cpR)"/><path d="M11.700 6.700L8.500 12.400" stroke="#fff" stroke-width="1.300" stroke-linecap="round"/></svg>
<div class="t" style="left:962.80px;top:82.00px;font-size:7.90px;color:#333;letter-spacing:0.173px;">Copilot</div>
<div class="a" style="left:995.10px;top:56.00px;width:0.70px;height:59.00px;background:#dcdcdc;"></div>
<svg style="left:1005.00px;top:108.20px;" width="6.6" height="3.8" viewBox="0 0 6.6 3.8"><path d="M0.300.300L3.300 3.300L6.300.300" fill="none" stroke="#444" stroke-width="0.950"/></svg>
<div class="a" style="left:379.30px;top:121.00px;width:19.00px;height:10.20px;background:#EDE8E4;"></div>
<div class="a" style="left:398.20px;top:121.00px;width:231.30px;height:10.20px;background:#FDFDFD;"></div>
<div class="a" style="left:629.50px;top:121.00px;width:20.70px;height:10.20px;background:#EDE8E4;"></div>
<div class="a" style="left:379.01px;top:124.40px;width:0.70px;height:3.20px;background:#858585;"></div>
<div class="a" style="left:385.29px;top:124.40px;width:0.70px;height:3.20px;background:#858585;"></div>
<div class="a" style="left:391.57px;top:124.40px;width:0.70px;height:3.20px;background:#858585;"></div>
<div class="a" style="left:404.13px;top:124.40px;width:0.70px;height:3.20px;background:#858585;"></div>
<div class="a" style="left:416.69px;top:124.40px;width:0.70px;height:3.20px;background:#858585;"></div>
<div class="t" style="left:421.52px;top:124.00px;font-size:6.60px;color:#555;">2</div>
<div class="a" style="left:429.25px;top:124.40px;width:0.70px;height:3.20px;background:#858585;"></div>
<div class="a" style="left:441.81px;top:124.40px;width:0.70px;height:3.20px;background:#858585;"></div>
<div class="t" style="left:446.64px;top:124.00px;font-size:6.60px;color:#555;">4</div>
<div class="a" style="left:454.37px;top:124.40px;width:0.70px;height:3.20px;background:#858585;"></div>
<div class="a" style="left:466.93px;top:124.40px;width:0.70px;height:3.20px;background:#858585;"></div>
<div class="t" style="left:471.76px;top:124.00px;font-size:6.60px;color:#555;">6</div>
<div class="a" style="left:479.49px;top:124.40px;width:0.70px;height:3.20px;background:#858585;"></div>
<div class="a" style="left:492.05px;top:124.40px;width:0.70px;height:3.20px;background:#858585;"></div>
<div class="t" style="left:496.88px;top:124.00px;font-size:6.60px;color:#555;">8</div>
<div class="a" style="left:504.61px;top:124.40px;width:0.70px;height:3.20px;background:#858585;"></div>
<div class="a" style="left:517.17px;top:124.40px;width:0.70px;height:3.20px;background:#858585;"></div>
<div class="t" style="left:520.20px;top:124.00px;font-size:6.60px;color:#555;letter-spacing:-0.071px;">10</div>
<div class="a" style="left:529.73px;top:124.40px;width:0.70px;height:3.20px;background:#858585;"></div>
<div class="a" style="left:542.29px;top:124.40px;width:0.70px;height:3.20px;background:#858585;"></div>
<div class="t" style="left:545.32px;top:124.00px;font-size:6.60px;color:#555;letter-spacing:-0.071px;">12</div>
<div class="a" style="left:554.85px;top:124.40px;width:0.70px;height:3.20px;background:#858585;"></div>
<div class="a" style="left:567.41px;top:124.40px;width:0.70px;height:3.20px;background:#858585;"></div>
<div class="t" style="left:570.44px;top:124.00px;font-size:6.60px;color:#555;letter-spacing:-0.071px;">14</div>
<div class="a" style="left:579.97px;top:124.40px;width:0.70px;height:3.20px;background:#858585;"></div>
<div class="a" style="left:592.53px;top:124.40px;width:0.70px;height:3.20px;background:#858585;"></div>
<div class="t" style="left:595.56px;top:124.00px;font-size:6.60px;color:#555;letter-spacing:-0.071px;">16</div>
<div class="a" style="left:605.09px;top:124.40px;width:0.70px;height:3.20px;background:#858585;"></div>
<div class="a" style="left:617.65px;top:124.40px;width:0.70px;height:3.20px;background:#858585;"></div>
<div class="t" style="left:620.68px;top:124.00px;font-size:6.60px;color:#555;letter-spacing:-0.071px;">18</div>
<div class="a" style="left:630.21px;top:124.40px;width:0.70px;height:3.20px;background:#858585;"></div>
<div class="a" style="left:636.49px;top:124.40px;width:0.70px;height:3.20px;background:#858585;"></div>
<div class="a" style="left:642.77px;top:124.40px;width:0.70px;height:3.20px;background:#858585;"></div>
<svg style="left:394.40px;top:119.60px;" width="8" height="14" viewBox="0 0 8 14"><path d="M0.500.400H7.500L4 4.800z" fill="#fff" stroke="#777" stroke-width="0.600"/><path d="M4 5.600L7.500 9V10.600H.500V9z" fill="#fff" stroke="#777" stroke-width="0.600"/><rect x="0.500" y="10.600" width="7" height="2.800" fill="#fff" stroke="#777" stroke-width="0.600"/></svg>
<svg style="left:616.50px;top:126.50px;" width="8" height="6" viewBox="0 0 8 6"><path d="M4 .400L7.500 3.400V5.400H.500V3.400z" fill="#fff" stroke="#777" stroke-width="0.600"/></svg>
<div class="a" style="left:3.00px;top:134.50px;width:10.80px;height:14.00px;background:#EDE8E4;"></div>
<div class="a" style="left:3.00px;top:148.50px;width:10.80px;height:327.20px;background:#FDFDFD;"></div>
<div class="a" style="left:3.00px;top:475.70px;width:10.80px;height:7.00px;background:#EDE8E4;"></div>
<div class="a" style="left:7.40px;top:135.65px;width:2.40px;height:0.70px;background:#858585;"></div>
<div class="a" style="left:7.40px;top:141.90px;width:2.40px;height:0.70px;background:#858585;"></div>
<div class="a" style="left:7.40px;top:154.40px;width:2.40px;height:0.70px;background:#858585;"></div>
<div class="a" style="left:7.40px;top:166.90px;width:2.40px;height:0.70px;background:#858585;"></div>
<div class="t" style="left:6.50px;top:170.00px;font-size:6.200px;color:#555;width:4.00px;height:7px;transform:rotate(-90deg);transform-origin:center center;text-align:center;letter-spacing:-0.200px">2</div>
<div class="a" style="left:7.40px;top:179.40px;width:2.40px;height:0.70px;background:#858585;"></div>
<div class="a" style="left:7.40px;top:191.90px;width:2.40px;height:0.70px;background:#858585;"></div>
<div class="t" style="left:6.50px;top:195.00px;font-size:6.200px;color:#555;width:4.00px;height:7px;transform:rotate(-90deg);transform-origin:center center;text-align:center;letter-spacing:-0.200px">4</div>
<div class="a" style="left:7.40px;top:204.40px;width:2.40px;height:0.70px;background:#858585;"></div>
<div class="a" style="left:7.40px;top:216.90px;width:2.40px;height:0.70px;background:#858585;"></div>
<div class="t" style="left:6.50px;top:220.00px;font-size:6.200px;color:#555;width:4.00px;height:7px;transform:rotate(-90deg);transform-origin:center center;text-align:center;letter-spacing:-0.200px">6</div>
<div class="a" style="left:7.40px;top:229.40px;width:2.40px;height:0.70px;background:#858585;"></div>
<div class="a" style="left:7.40px;top:241.90px;width:2.40px;height:0.70px;background:#858585;"></div>
<div class="t" style="left:6.50px;top:245.00px;font-size:6.200px;color:#555;width:4.00px;height:7px;transform:rotate(-90deg);transform-origin:center center;text-align:center;letter-spacing:-0.200px">8</div>
<div class="a" style="left:7.40px;top:254.40px;width:2.40px;height:0.70px;background:#858585;"></div>
<div class="a" style="left:7.40px;top:266.90px;width:2.40px;height:0.70px;background:#858585;"></div>
<div class="t" style="left:4.80px;top:270.00px;font-size:6.200px;color:#555;width:7.40px;height:7px;transform:rotate(-90deg);transform-origin:center center;text-align:center;letter-spacing:-0.200px">10</div>
<div class="a" style="left:7.40px;top:279.40px;width:2.40px;height:0.70px;background:#858585;"></div>
<div class="a" style="left:7.40px;top:291.90px;width:2.40px;height:0.70px;background:#858585;"></div>
<div class="t" style="left:4.80px;top:295.00px;font-size:6.200px;color:#555;width:7.40px;height:7px;transform:rotate(-90deg);transform-origin:center center;text-align:center;letter-spacing:-0.200px">12</div>
<div class="a" style="left:7.40px;top:304.40px;width:2.40px;height:0.70px;background:#858585;"></div>
<div class="a" style="left:7.40px;top:316.90px;width:2.40px;height:0.70px;background:#858585;"></div>
<div class="t" style="left:4.80px;top:320.00px;font-size:6.200px;color:#555;width:7.40px;height:7px;transform:rotate(-90deg);transform-origin:center center;text-align:center;letter-spacing:-0.200px">14</div>
<div class="a" style="left:7.40px;top:329.40px;width:2.40px;height:0.70px;background:#858585;"></div>
<div class="a" style="left:7.40px;top:341.90px;width:2.40px;height:0.70px;background:#858585;"></div>
<div class="t" style="left:4.80px;top:345.00px;font-size:6.200px;color:#555;width:7.40px;height:7px;transform:rotate(-90deg);transform-origin:center center;text-align:center;letter-spacing:-0.200px">16</div>
<div class="a" style="left:7.40px;top:354.40px;width:2.40px;height:0.70px;background:#858585;"></div>
<div class="a" style="left:7.40px;top:366.90px;width:2.40px;height:0.70px;background:#858585;"></div>
<div class="t" style="left:4.80px;top:370.00px;font-size:6.200px;color:#555;width:7.40px;height:7px;transform:rotate(-90deg);transform-origin:center center;text-align:center;letter-spacing:-0.200px">18</div>
<div class="a" style="left:7.40px;top:379.40px;width:2.40px;height:0.70px;background:#858585;"></div>
<div class="a" style="left:7.40px;top:391.90px;width:2.40px;height:0.70px;background:#858585;"></div>
<div class="t" style="left:4.80px;top:395.00px;font-size:6.200px;color:#555;width:7.40px;height:7px;transform:rotate(-90deg);transform-origin:center center;text-align:center;letter-spacing:-0.200px">20</div>
<div class="a" style="left:7.40px;top:404.40px;width:2.40px;height:0.70px;background:#858585;"></div>
<div class="a" style="left:7.40px;top:416.90px;width:2.40px;height:0.70px;background:#858585;"></div>
<div class="t" style="left:4.80px;top:420.00px;font-size:6.200px;color:#555;width:7.40px;height:7px;transform:rotate(-90deg);transform-origin:center center;text-align:center;letter-spacing:-0.200px">22</div>
<div class="a" style="left:7.40px;top:429.40px;width:2.40px;height:0.70px;background:#858585;"></div>
<div class="a" style="left:7.40px;top:441.90px;width:2.40px;height:0.70px;background:#858585;"></div>
<div class="t" style="left:4.80px;top:445.00px;font-size:6.200px;color:#555;width:7.40px;height:7px;transform:rotate(-90deg);transform-origin:center center;text-align:center;letter-spacing:-0.200px">24</div>
<div class="a" style="left:7.40px;top:454.40px;width:2.40px;height:0.70px;background:#858585;"></div>
<div class="a" style="left:7.40px;top:466.90px;width:2.40px;height:0.70px;background:#858585;"></div>
<div class="a" style="left:7.40px;top:479.40px;width:2.40px;height:0.70px;background:#858585;"></div>
<svg style="left:5.80px;top:124.60px;" width="5.5" height="6" viewBox="0 0 5.5 6"><path d="M1 0.500V5H5" fill="none" stroke="#444" stroke-width="1.300"/></svg>
<div class="a" style="left:17.00px;top:134.00px;width:0.60px;height:395.60px;background:#E2DDD8;"></div>
<div class="a" style="left:2.00px;top:134.00px;width:1018.00px;height:0.60px;background:#E6E1DC;"></div>
<div class="a" style="left:102.40px;top:134.80px;width:270.70px;height:347.40px;background:#4A0099;"></div>
<div class="a" style="left:379.30px;top:134.80px;width:270.60px;height:347.40px;background:#fff;box-shadow:0 0 0 0.500px #d5d0cb;"></div>
<div class="a" style="left:655.60px;top:134.80px;width:270.70px;height:347.40px;background:#fff;box-shadow:0 0 0 0.500px #d5d0cb;"></div>
<div class="a" style="left:240.30px;top:488.00px;width:270.70px;height:45.00px;background:#fff;box-shadow:0 0 0 0.500px #d5d0cb;"></div>
<div class="a" style="left:517.40px;top:488.00px;width:270.80px;height:45.00px;background:#fff;box-shadow:0 0 0 0.500px #d5d0cb;"></div>
<div class="t" style="left:122.00px;top:159.00px;font-size:37.30px;color:#BDEEFF;font-weight:bold;transform:scaleY(1.040);transform-origin:0 31px;-webkit-text-stroke:0.400px #BDEEFF;">BRAND</div>
<div class="t" style="left:122.00px;top:202.00px;font-size:37.30px;color:#BDEEFF;font-weight:bold;transform:scaleY(1.040);transform-origin:0 31px;-webkit-text-stroke:0.400px #BDEEFF;">VOICE AND</div>
<div class="t" style="left:122.00px;top:245.00px;font-size:37.30px;color:#BDEEFF;font-weight:bold;transform:scaleY(1.040);transform-origin:0 31px;-webkit-text-stroke:0.400px #BDEEFF;">STYLE</div>
<div class="t" style="left:122.00px;top:289.00px;font-size:37.30px;color:#BDEEFF;font-weight:bold;transform:scaleY(1.040);transform-origin:0 31px;-webkit-text-stroke:0.400px #BDEEFF;">GUIDE</div>
<svg style="left:399.00px;top:148.00px;overflow:hidden;" width="232" height="132.7" viewBox="0 0 232 132.700"><defs><clipPath id="tc"><rect x="0" y="0" width="232" height="132.700"/></clipPath><filter id="tb" x="-2%" y="-2%" width="104%" height="104%"><feGaussianBlur stdDeviation="0.450"/></filter><filter id="tb2" x="-30%" y="-30%" width="160%" height="160%"><feGaussianBlur stdDeviation="3"/></filter><linearGradient id="wallg" x1="0" y1="0" x2="1" y2="0"><stop offset="0" stop-color="#D6DAF0"/><stop offset="0.100" stop-color="#CDD2EC"/><stop offset="0.130" stop-color="#C3C9E7"/><stop offset="0.300" stop-color="#CBD0EB"/><stop offset="0.400" stop-color="#C2C8E6"/><stop offset="0.440" stop-color="#F6F7FD"/><stop offset="0.490" stop-color="#D9DDF2"/><stop offset="0.530" stop-color="#F2F3FB"/><stop offset="0.600" stop-color="#DDE0F3"/><stop offset="0.700" stop-color="#EEF0FA"/><stop offset="1" stop-color="#F7F8FD"/></linearGradient><linearGradient id="floorg" x1="0" y1="0" x2="0" y2="1"><stop offset="0" stop-color="#8D98BD"/><stop offset="0.120" stop-color="#5B6891"/><stop offset="0.450" stop-color="#3A466E"/><stop offset="1" stop-color="#414D77"/></linearGradient><linearGradient id="floorl" x1="0" y1="0" x2="1" y2="0"><stop offset="0" stop-color="#7784AE" stop-opacity="0.750"/><stop offset="0.450" stop-color="#5F6C97" stop-opacity="0.350"/><stop offset="0.700" stop-color="#2A3557" stop-opacity="0"/><stop offset="1" stop-color="#1B2446" stop-opacity="0.700"/></linearGradient><linearGradient id="ceilg" x1="0" y1="0" x2="1" y2="0.300"><stop offset="0" stop-color="#9BA6D0"/><stop offset="0.350" stop-color="#C3CAE8"/><stop offset="0.650" stop-color="#A3AED6"/><stop offset="1" stop-color="#8F9BC9"/></linearGradient><linearGradient id="rpan" x1="0" y1="0" x2="0" y2="1"><stop offset="0" stop-color="#A9B3DB"/><stop offset="0.500" stop-color="#C2C9E8"/><stop offset="1" stop-color="#D5D9F0"/></linearGradient></defs><g clip-path="url(#tc)"><g filter="url(#tb)"><rect x="-2" y="-2" width="236" height="137" fill="url(#ceilg)"/><path d="M120 40L190 40L190 76L150 70z" fill="#DDE1F4"/><path d="M-2 -2L12.700 0L116 43L167 66L184 73L183 73.300L116 82.300L0 103.500L-2 104z" fill="url(#wallg)"/><path d="M25 -2V110" stroke="#98A2CC" stroke-width="0.500" opacity="0.5"/><path d="M56.5 -2V110" stroke="#98A2CC" stroke-width="0.500" opacity="0.45"/><path d="M77 -2V110" stroke="#98A2CC" stroke-width="0.500" opacity="0.35"/><path d="M91.8 -2V110" stroke="#98A2CC" stroke-width="0.500" opacity="0.3"/><path d="M102.8 -2V110" stroke="#98A2CC" stroke-width="0.500" opacity="0.25"/><path d="M112.4 -2V110" stroke="#98A2CC" stroke-width="0.500" opacity="0.2"/><path d="M120 40V86" stroke="#B7BFE2" stroke-width="1.100" opacity="0.550"/><path d="M126 40V86" stroke="#B7BFE2" stroke-width="1.100" opacity="0.550"/><path d="M131.5 40V86" stroke="#B7BFE2" stroke-width="1.100" opacity="0.550"/><path d="M136.5 40V86" stroke="#B7BFE2" stroke-width="1.100" opacity="0.550"/><path d="M141 40V86" stroke="#B7BFE2" stroke-width="1.100" opacity="0.550"/><path d="M145 40V86" stroke="#B7BFE2" stroke-width="1.100" opacity="0.550"/><path d="M149 40V86" stroke="#B7BFE2" stroke-width="1.100" opacity="0.550"/><path d="M152.5 40V86" stroke="#B7BFE2" stroke-width="1.100" opacity="0.550"/><path d="M156 40V86" stroke="#B7BFE2" stroke-width="1.100" opacity="0.550"/><path d="M159 40V86" stroke="#B7BFE2" stroke-width="1.100" opacity="0.550"/><path d="M162 40V86" stroke="#B7BFE2" stroke-width="1.100" opacity="0.550"/><path d="M165 40V86" stroke="#B7BFE2" stroke-width="1.100" opacity="0.550"/><path d="M168 40V86" stroke="#B7BFE2" stroke-width="1.100" opacity="0.550"/><path d="M171 40V86" stroke="#B7BFE2" stroke-width="1.100" opacity="0.550"/><path d="M174 40V86" stroke="#B7BFE2" stroke-width="1.100" opacity="0.550"/><path d="M34.600 -2L240 -2L240 76L184 72.500L167 64.500L116 39.500L86 23.700z" fill="url(#ceilg)"/><path d="M128 46L190 46L190 75L184 72.500L167 64.500z" fill="#D9DDF2"/><linearGradient id="cs1" x1="0" y1="0" x2="0" y2="1"><stop offset="0" stop-color="#8590C0"/><stop offset="0.450" stop-color="#A9B3DA"/><stop offset="1" stop-color="#C3CAE8"/></linearGradient><path d="M60 0L181 6L181 26L116 24L84 22z" fill="url(#cs1)"/><path d="M181 6L215 4L215 60L198 60L196 36L190 28L181 25z" fill="#B4BDE0"/><path d="M181 6V25" stroke="#8E99C6" stroke-width="0.400"/><path d="M70 12L181 16L181 21L95 19z" fill="#CDD3EC" opacity="0.450"/><path d="M-2 109.700L116 84L183 73.600L190 73.700L240 140L-2 140z" fill="url(#floorg)"/><path d="M-2 109.700L116 84L183 73.600L190 73.700L240 140L-2 140z" fill="url(#floorl)"/><path d="M140 80L186 74L194 90L150 98z" fill="#A5AFCF" opacity="0.380" filter="url(#tb2)"/><path d="M-2 120L150 84" stroke="#2A3459" stroke-width="0.450" opacity="0.500"/><path d="M-2 132L168 82" stroke="#2A3459" stroke-width="0.450" opacity="0.500"/><path d="M40 134L176 80" stroke="#2A3459" stroke-width="0.450" opacity="0.500"/><path d="M100 134L181 78" stroke="#2A3459" stroke-width="0.450" opacity="0.500"/><path d="M150 134L185 77" stroke="#2A3459" stroke-width="0.450" opacity="0.500"/><path d="M190 134L188 77" stroke="#2A3459" stroke-width="0.450" opacity="0.500"/><path d="M20 106L120 134" stroke="#2A3459" stroke-width="0.450" opacity="0.400"/><path d="M70 95L200 134" stroke="#2A3459" stroke-width="0.450" opacity="0.400"/><path d="M110 86L225 125" stroke="#2A3459" stroke-width="0.450" opacity="0.400"/><path d="M140 81L215 108" stroke="#2A3459" stroke-width="0.450" opacity="0.400"/><path d="M160 78L205 94" stroke="#2A3459" stroke-width="0.450" opacity="0.400"/><path d="M-2 103.800L116 82.100L183 73.100L183 73.700L116 84.200L-2 110.400z" fill="#0E1535"/><path d="M12.700 -1L34.600 -1L86 23.700L116 39.500L167 64.500L184 72.500L184 73.200L167 66L116 43L12.700 0z" fill="#0E1535"/><path d="M10 -1L14.500 -1L116 41.800L116 43.400L10 0z" fill="#2A3560" opacity="0.700"/><path d="M181 4L240 -2L240 137L231.100 127.700L225.300 121.300L215 109.700L204.700 96.900L195.700 84L190 73.700L184 72z" fill="url(#rpan)"/><path d="M188 73.700L190 73.700L195.700 84L204.700 96.900L215 109.700L225.300 121.300L231.100 127.700L240 137L240 140L231 140L225.300 132.200L218.900 122.600L208.600 109.700L198.300 94.300L191.900 82.700z" fill="#66729C"/><path d="M190 73.700L195.700 84L204.700 96.900L215 109.700L225.300 121.300L231.100 127.700L236 133" stroke="#AEB7D8" stroke-width="0.800" fill="none"/><path d="M145 54L176 54.500C180 55 181.500 57 182.500 62L183.500 72" fill="none" stroke="#0E1535" stroke-width="0.800"/><path d="M137 50L176 51C181.500 51.500 183 54 184 60L185.600 72" fill="none" stroke="#0E1535" stroke-width="1"/><path d="M129 45.500L176 47C182.500 47.600 184.500 50.500 185.500 58L187.300 72" fill="none" stroke="#0E1535" stroke-width="1.500"/><path d="M117 39.500L176 41.800L179 42C185 42.800 186.300 46 186.500 56L189 66L190.800 77" fill="none" stroke="#0E1535" stroke-width="2.100"/><path d="M104 32.800L116 34L176 35.400L181 35.800C188.500 36.800 190.300 42 190.800 56L192.500 66L194.500 82" fill="none" stroke="#0E1535" stroke-width="3.300"/><path d="M83.500 21.600L116 22.300L150 23.200L176 24.100L187 25.200C191 26.500 193 28.500 194.700 31.300C196.500 34.500 198 37 198.600 40.100L199.700 56L201.600 66L205.500 93.800L206.500 100L202 100L200.800 93.800L197.500 66L195.600 56L194.700 45.600C194.300 41 193.800 39 192.500 36.800C191 34 189.500 32.300 187 31.300L176 29.100L116 28.300L86 23.700z" fill="#0E1535"/><path d="M68 -1L215.700 -1C218.500 1.500 219.500 4 220.100 7L221.800 18L223.400 40.100L224.500 56L226.700 66L230 102L233 134L220 134L214 102L210.200 66L209.100 56L208 45.600L206.300 34.600C205.500 30 204.800 27 203.600 23.600C202.300 20 200.500 17.500 198 15.300C195 12.500 191.500 11 187 10.300L176 9.800L116 4.500L68 1z" fill="#0E1535"/><path d="M150 3L196 4.500C209 6 212.500 12 214.500 28L217.500 56L222 104L225 134" fill="none" stroke="#2B3766" stroke-width="0.600" opacity="0.900"/><path d="M150 6L192 7.400C205 9 209 15 211 30L214 56L218.500 104L221.500 134" fill="none" stroke="#2B3766" stroke-width="0.600" opacity="0.900"/><path d="M190 1.500L203 2.500C214 4 217 9 218.500 24L221 56L225.500 104L228.500 134" fill="none" stroke="#2B3766" stroke-width="0.600" opacity="0.900"/><path d="M215.700 -1L240 -1L240 134L233 134L230 102L226.700 66L224.500 56L223.400 40.100L221.800 18L220.100 7C219.500 4 218.500 1.500 215.700 -1z" fill="#C4CAE8"/><path d="M221.500 14L231.500 3" stroke="#8C97C4" stroke-width="0.450"/><circle cx="135" cy="24.300" r="0.900" fill="#E8EBF8"/><circle cx="163" cy="26.300" r="0.900" fill="#E8EBF8"/><rect x="183" y="62" width="5" height="11.500" fill="#0E1535"/><path d="M168.300 65.500C168.300 63.500 170.700 63.500 170.700 65.500L171.200 70L170.500 73.500L168.500 73.500L167.800 70z" fill="#0B1026"/><circle cx="169.500" cy="62.600" r="1.100" fill="#0B1026"/><path d="M168.500 74L170.500 74L171 80L168.300 80z" fill="#1C2547" opacity="0.400"/></g></g></svg>
<div class="t" style="left:399.00px;top:315.00px;font-size:5.35px;color:#111;font-weight:bold;-webkit-text-stroke:0.120px #111;">PURPOSE</div>
<div class="t" style="left:399.00px;top:324.00px;font-size:4.62px;color:#6a6a6a;">Help anyone create consistent customer-facing copy that is clear, credible, and easy to scan.</div>
<div class="a" style="left:462.43px;top:327.20px;width:32.87px;height:0.30px;background:#4F7FE0;"></div>
<div class="a" style="left:462.43px;top:327.85px;width:32.87px;height:0.30px;background:#4F7FE0;"></div>
<svg style="left:386.30px;top:328.30px;" width="6" height="5.5" viewBox="0 0 6 5.5"><path d="M0.300.800L2.400 3.200M0.300 5L2.800 1.200" stroke="#555" stroke-width="0.500" fill="none"/><circle cx="4.200" cy="1.800" r="1.300" fill="none" stroke="#555" stroke-width="0.450"/></svg>
<div class="t" style="left:399.00px;top:353.00px;font-size:5.35px;color:#111;font-weight:bold;-webkit-text-stroke:0.120px #111;">VOICE PRINCIPLES</div>
<div class="a" style="left:399.60px;top:360.50px;width:1.25px;height:1.25px;background:#111;"></div>
<div class="t" style="left:407.00px;top:359.00px;font-size:5.08px;color:#1c1c1c;-webkit-text-stroke:0.140px #1c1c1c;">Clear first: lead with the outcome, then the feature.</div>
<div class="a" style="left:399.60px;top:367.52px;width:1.25px;height:1.25px;background:#111;"></div>
<div class="t" style="left:407.00px;top:366.00px;font-size:5.08px;color:#1c1c1c;-webkit-text-stroke:0.140px #1c1c1c;">Credible: use specific facts only when you can point to an approved source.</div>
<div class="a" style="left:399.60px;top:374.54px;width:1.25px;height:1.25px;background:#111;"></div>
<div class="t" style="left:407.00px;top:373.00px;font-size:5.08px;color:#1c1c1c;-webkit-text-stroke:0.140px #1c1c1c;">Helpful: sound like a practical expert, not a marketer.</div>
<div class="a" style="left:399.60px;top:381.56px;width:1.25px;height:1.25px;background:#111;"></div>
<div class="t" style="left:407.00px;top:380.00px;font-size:5.08px;color:#1c1c1c;-webkit-text-stroke:0.140px #1c1c1c;">Confident, not loud: avoid hype and sweeping claims.</div>
<div class="a" style="left:399.60px;top:388.58px;width:1.25px;height:1.25px;background:#111;"></div>
<div class="t" style="left:407.00px;top:387.00px;font-size:5.08px;color:#1c1c1c;-webkit-text-stroke:0.140px #1c1c1c;">Human: short sentences, everyday words, no jargon unless you define it in one sentence.</div>
<div class="t" style="left:399.00px;top:418.00px;font-size:5.35px;color:#111;font-weight:bold;-webkit-text-stroke:0.120px #111;">TONE</div>
<div class="a" style="left:399.60px;top:425.60px;width:1.25px;height:1.25px;background:#111;"></div>
<div class="t" style="left:407.00px;top:424.00px;font-size:5.08px;color:#1c1c1c;-webkit-text-stroke:0.140px #1c1c1c;">Professional and approachable.</div>
<div class="a" style="left:399.60px;top:432.70px;width:1.25px;height:1.25px;background:#111;"></div>
<div class="t" style="left:407.00px;top:431.00px;font-size:5.08px;color:#1c1c1c;-webkit-text-stroke:0.140px #1c1c1c;">Practical and direct.</div>
<div class="a" style="left:399.60px;top:439.80px;width:1.25px;height:1.25px;background:#111;"></div>
<div class="t" style="left:407.00px;top:438.00px;font-size:5.08px;color:#1c1c1c;-webkit-text-stroke:0.140px #1c1c1c;">Customer focused: what you get and how it helps language.</div>
<div class="a" style="left:399.60px;top:446.90px;width:1.25px;height:1.25px;background:#111;"></div>
<div class="t" style="left:407.00px;top:445.00px;font-size:5.08px;color:#1c1c1c;-webkit-text-stroke:0.140px #1c1c1c;">Avoid blame, fear, and pressure.</div>
<div class="t" style="left:675.80px;top:149.00px;font-size:5.35px;color:#111;font-weight:bold;-webkit-text-stroke:0.120px #111;">STYLE RULES</div>
<div class="a" style="left:676.60px;top:156.45px;width:1.25px;height:1.25px;background:#111;"></div>
<div class="t" style="left:684.00px;top:155.00px;font-size:5.08px;color:#1c1c1c;-webkit-text-stroke:0.140px #1c1c1c;">Use short sentences and short paragraphs.</div>
<div class="a" style="left:676.60px;top:163.48px;width:1.25px;height:1.25px;background:#111;"></div>
<div class="t" style="left:684.00px;top:162.00px;font-size:5.08px;color:#1c1c1c;-webkit-text-stroke:0.140px #1c1c1c;">Prefer active voice.</div>
<div class="a" style="left:676.60px;top:170.51px;width:1.25px;height:1.25px;background:#111;"></div>
<div class="t" style="left:684.00px;top:169.00px;font-size:5.08px;color:#1c1c1c;-webkit-text-stroke:0.140px #1c1c1c;">Use bullets for features and benefits.</div>
<div class="a" style="left:676.60px;top:177.54px;width:1.25px;height:1.25px;background:#111;"></div>
<div class="t" style="left:684.00px;top:176.00px;font-size:5.08px;color:#1c1c1c;-webkit-text-stroke:0.140px #1c1c1c;">Use headings that describe outcomes, not features.</div>
<div class="a" style="left:676.60px;top:184.57px;width:1.25px;height:1.25px;background:#111;"></div>
<div class="t" style="left:684.00px;top:183.00px;font-size:5.08px;color:#1c1c1c;-webkit-text-stroke:0.140px #1c1c1c;">Use consistent product naming: EcoSense 360, EcoSense 360 Hub, Cloud Management Portal.</div>
<div class="a" style="left:676.60px;top:191.60px;width:1.25px;height:1.25px;background:#111;"></div>
<div class="t" style="left:684.00px;top:190.00px;font-size:5.08px;color:#1c1c1c;-webkit-text-stroke:0.140px #1c1c1c;">If you use numbers: keep them simple and explain what they mean.</div>
<div class="a" style="left:684.00px;top:166.20px;width:13.83px;height:0.30px;background:#4F7FE0;"></div>
<div class="a" style="left:684.00px;top:166.85px;width:13.83px;height:0.30px;background:#4F7FE0;"></div>
<svg style="left:756.57px;top:187.20px;" width="23.1578" height="1.2" viewBox="0 0 23.1578 1.2"><path d="M0 0.500L0.6 0L1.8 1L3 0L4.2 1L5.4 0L6.6 1L7.8 0L9 1L10.2 0L11.4 1L12.6 0L13.8 1L15 0L16.2 1L17.4 0L18.6 1L19.8 0L21 1L22.2 0L23.4 1" fill="none" stroke="#E32222" stroke-width="0.600"/></svg>
<svg style="left:792.44px;top:187.20px;" width="23.1578" height="1.2" viewBox="0 0 23.1578 1.2"><path d="M0 0.500L0.6 0L1.8 1L3 0L4.2 1L5.4 0L6.6 1L7.8 0L9 1L10.2 0L11.4 1L12.6 0L13.8 1L15 0L16.2 1L17.4 0L18.6 1L19.8 0L21 1L22.2 0L23.4 1" fill="none" stroke="#E32222" stroke-width="0.600"/></svg>
<div class="t" style="left:675.80px;top:221.00px;font-size:5.35px;color:#111;font-weight:bold;-webkit-text-stroke:0.120px #111;">WORDS TO USE</div>
<div class="a" style="left:676.60px;top:228.75px;width:1.25px;height:1.25px;background:#111;"></div>
<div class="t" style="left:684.00px;top:227.00px;font-size:5.08px;color:#1c1c1c;-webkit-text-stroke:0.140px #1c1c1c;">Monitor, automate, optimise, reduce manual work, faster insights, room level control, real time</div>
<div class="t" style="left:684.00px;top:234.00px;font-size:5.08px;color:#1c1c1c;-webkit-text-stroke:0.140px #1c1c1c;">visibility.</div>
<div class="a" style="left:676.60px;top:242.81px;width:1.25px;height:1.25px;background:#111;"></div>
<div class="t" style="left:684.00px;top:241.00px;font-size:5.08px;color:#1c1c1c;-webkit-text-stroke:0.140px #1c1c1c;">Integration where relevant: connects with existing systems and name only what is approved.</div>
<div class="a" style="left:676.60px;top:249.84px;width:1.25px;height:1.25px;background:#111;"></div>
<div class="t" style="left:684.00px;top:248.00px;font-size:5.08px;color:#1c1c1c;-webkit-text-stroke:0.140px #1c1c1c;">Security where relevant: encrypted in transit and at rest, and reference approved certifications</div>
<div class="t" style="left:684.00px;top:255.00px;font-size:5.08px;color:#1c1c1c;-webkit-text-stroke:0.140px #1c1c1c;">only.</div>
<svg style="left:727.49px;top:231.50px;" width="18.9162" height="1.2" viewBox="0 0 18.9162 1.2"><path d="M0 0.500L0.6 0L1.8 1L3 0L4.2 1L5.4 0L6.6 1L7.8 0L9 1L10.2 0L11.4 1L12.6 0L13.8 1L15 0L16.2 1L17.4 0L18.6 1" fill="none" stroke="#E32222" stroke-width="0.600"/></svg>
<div class="a" style="left:826.31px;top:245.60px;width:12.71px;height:0.30px;background:#4F7FE0;"></div>
<div class="a" style="left:826.31px;top:246.25px;width:12.71px;height:0.30px;background:#4F7FE0;"></div>
<div class="t" style="left:675.80px;top:286.00px;font-size:5.35px;color:#111;font-weight:bold;-webkit-text-stroke:0.120px #111;">WORDS TO AVOID</div>
<div class="a" style="left:676.60px;top:293.90px;width:1.25px;height:1.25px;background:#111;"></div>
<div class="t" style="left:684.00px;top:292.00px;font-size:5.08px;color:#1c1c1c;-webkit-text-stroke:0.140px #1c1c1c;">Revolutionise, game changer, guaranteed, best in class, flawless, instant results.</div>
<div class="a" style="left:676.60px;top:301.00px;width:1.25px;height:1.25px;background:#111;"></div>
<div class="t" style="left:684.00px;top:299.00px;font-size:5.08px;color:#1c1c1c;-webkit-text-stroke:0.140px #1c1c1c;">Any promise that cannot be proven in the provided sources.</div>
<svg style="left:684.00px;top:296.60px;" width="30.4975" height="1.2" viewBox="0 0 30.4975 1.2"><path d="M0 0.500L0.6 0L1.8 1L3 0L4.2 1L5.4 0L6.6 1L7.8 0L9 1L10.2 0L11.4 1L12.6 0L13.8 1L15 0L16.2 1L17.4 0L18.6 1L19.8 0L21 1L22.2 0L23.4 1L24.6 0L25.8 1L27 0L28.2 1L29.4 0L30.6 1" fill="none" stroke="#E32222" stroke-width="0.600"/></svg>
<div class="t" style="left:675.80px;top:331.00px;font-size:5.35px;color:#111;font-weight:bold;-webkit-text-stroke:0.120px #111;">CLAIM AND ACCURACY RULES</div>
<div class="a" style="left:676.60px;top:337.80px;width:1.25px;height:1.25px;background:#111;"></div>
<div class="t" style="left:684.00px;top:336.00px;font-size:5.08px;color:#1c1c1c;-webkit-text-stroke:0.140px #1c1c1c;">Only use product facts from approved documents.</div>
<div class="a" style="left:676.60px;top:344.85px;width:1.25px;height:1.25px;background:#111;"></div>
<div class="t" style="left:684.00px;top:343.00px;font-size:5.08px;color:#1c1c1c;-webkit-text-stroke:0.140px #1c1c1c;">Only use outcome metrics if the source provides them, and present them as case study results,</div>
<div class="t" style="left:684.00px;top:350.00px;font-size:5.08px;color:#1c1c1c;-webkit-text-stroke:0.140px #1c1c1c;">not promises.</div>
<div class="a" style="left:676.60px;top:358.95px;width:1.25px;height:1.25px;background:#111;"></div>
<div class="t" style="left:684.00px;top:357.00px;font-size:5.08px;color:#1c1c1c;-webkit-text-stroke:0.140px #1c1c1c;">Pricing is illustrative and subject to change: do not present it as a firm quote.</div>
<div class="a" style="left:676.60px;top:366.00px;width:1.25px;height:1.25px;background:#111;"></div>
<div class="t" style="left:684.00px;top:364.00px;font-size:5.08px;color:#1c1c1c;-webkit-text-stroke:0.140px #1c1c1c;">If a claim needs approval or legal review and you do not have the approved wording: flag it as a</div>
<div class="t" style="left:684.00px;top:371.00px;font-size:5.08px;color:#1c1c1c;-webkit-text-stroke:0.140px #1c1c1c;">gap.</div>
<div class="a" style="left:817.83px;top:347.70px;width:16.94px;height:0.30px;background:#4F7FE0;"></div>
<div class="a" style="left:817.83px;top:348.35px;width:16.94px;height:0.30px;background:#4F7FE0;"></div>
<div class="t" style="left:675.80px;top:403.00px;font-size:5.35px;color:#111;font-weight:bold;-webkit-text-stroke:0.120px #111;">CHANNEL FORMATTING RULES</div>
<div class="t" style="left:675.80px;top:412.00px;font-size:4.45px;color:#111;font-weight:bold;-webkit-text-stroke:0.120px #111;">Email</div>
<div class="a" style="left:676.60px;top:418.30px;width:1.25px;height:1.25px;background:#111;"></div>
<div class="t" style="left:684.00px;top:417.00px;font-size:5.08px;color:#1c1c1c;-webkit-text-stroke:0.140px #1c1c1c;">Subject line: benefit led, 6 to 10 words.</div>
<div class="a" style="left:676.60px;top:425.30px;width:1.25px;height:1.25px;background:#111;"></div>
<div class="t" style="left:684.00px;top:424.00px;font-size:5.08px;color:#1c1c1c;-webkit-text-stroke:0.140px #1c1c1c;">Preview text: one sentence that supports the subject.</div>
<div class="a" style="left:676.60px;top:432.30px;width:1.25px;height:1.25px;background:#111;"></div>
<div class="t" style="left:684.00px;top:431.00px;font-size:5.08px;color:#1c1c1c;-webkit-text-stroke:0.140px #1c1c1c;">Body: 2 to 3 short sections, then one clear call to action.</div>
<div class="a" style="left:676.60px;top:439.30px;width:1.25px;height:1.25px;background:#111;"></div>
<div class="t" style="left:684.00px;top:438.00px;font-size:5.08px;color:#1c1c1c;-webkit-text-stroke:0.140px #1c1c1c;">Keep it scannable: bullets beat paragraphs.</div>
<div class="t" style="left:675.80px;top:449.00px;font-size:4.45px;color:#111;font-weight:bold;-webkit-text-stroke:0.120px #111;">Web page section</div>
<div class="a" style="left:676.60px;top:456.00px;width:1.25px;height:1.25px;background:#111;"></div>
<div class="t" style="left:684.00px;top:454.00px;font-size:5.08px;color:#1c1c1c;-webkit-text-stroke:0.140px #1c1c1c;">Headline: outcome.</div>
<div class="a" style="left:676.60px;top:463.00px;width:1.25px;height:1.25px;background:#111;"></div>
<div class="t" style="left:684.00px;top:461.00px;font-size:5.08px;color:#1c1c1c;-webkit-text-stroke:0.140px #1c1c1c;">Subhead: who it is for and why it matters.</div>
<div class="a" style="left:676.60px;top:470.00px;width:1.25px;height:1.25px;background:#111;"></div>
<div class="t" style="left:684.00px;top:468.00px;font-size:5.08px;color:#1c1c1c;-webkit-text-stroke:0.140px #1c1c1c;">Benefits: 3 to 5 bullets.</div>
<div class="a" style="left:261.40px;top:506.20px;width:1.25px;height:1.25px;background:#111;"></div>
<div class="t" style="left:268.80px;top:505.00px;font-size:5.08px;color:#1c1c1c;-webkit-text-stroke:0.140px #1c1c1c;">Proof: one short case study line only when approved.</div>
<div class="a" style="left:261.40px;top:513.45px;width:1.25px;height:1.25px;background:#111;"></div>
<div class="t" style="left:268.80px;top:512.00px;font-size:5.08px;color:#1c1c1c;-webkit-text-stroke:0.140px #1c1c1c;">Call to action: short and specific.</div>
<div class="a" style="left:268.80px;top:516.30px;width:14.40px;height:0.30px;background:#4F7FE0;"></div>
<div class="a" style="left:268.80px;top:516.95px;width:14.40px;height:0.30px;background:#4F7FE0;"></div>
<div class="t" style="left:260.90px;top:523.00px;font-size:4.45px;color:#111;font-weight:bold;-webkit-text-stroke:0.120px #111;">Social</div>
<div class="a" style="left:261.40px;top:531.00px;width:1.25px;height:1.25px;background:#111;"></div>
<div class="t" style="left:268.80px;top:529.00px;font-size:5.08px;color:#1c1c1c;-webkit-text-stroke:0.140px #1c1c1c;">One idea.</div>
<div class="a" style="left:2.00px;top:529.60px;width:1018.00px;height:12.50px;background:#F3F3F3;border-top:0.700px solid #D9D5D1;"></div>
<div class="t" style="left:9.20px;top:534.00px;font-size:7.30px;color:#444;letter-spacing:-0.158px;">Page 2 of 5</div>
<div class="t" style="left:58.10px;top:534.00px;font-size:7.30px;color:#444;letter-spacing:-0.153px;">418 words</div>
<svg style="left:118.10px;top:532.70px;" width="10" height="8.5" viewBox="0 0 10 8.5"><path d="M0.400 1v6h3.600c.500 0 .800.300.800.800C4.800 7.300 5.100 7 5.600 7h0.800M4.800 7.800V1.600M4.800 1.600C4.800 1.100 4.500.800 4 .800H.400M4.800 1.600c0-.500.300-.800.800-.800H9.200V4.500" fill="none" stroke="#444" stroke-width="0.700"/><path d="M6.600 5.600L9.400 8.400M9.400 5.600L6.600 8.400" stroke="#444" stroke-width="0.700"/></svg>
<div class="t" style="left:139.30px;top:534.00px;font-size:7.30px;color:#444;letter-spacing:-0.259px;">English (United States)</div>
<div class="t" style="left:221.80px;top:534.00px;font-size:7.30px;color:#444;letter-spacing:-0.201px;">Text Predictions: On</div>
<svg style="left:296.80px;top:532.50px;" width="10" height="8.6" viewBox="0 0 10 8.6"><rect x="0.400" y="0.400" width="9.200" height="7.800" fill="none" stroke="#444" stroke-width="0.700"/><path d="M0.400 2.200H9.600" stroke="#444" stroke-width="0.700"/><circle cx="6.200" cy="5.400" r="1.900" fill="#444"/><circle cx="6.200" cy="5.400" r="0.800" fill="#F3F3F3"/></svg>
<svg style="left:318.00px;top:532.30px;" width="10" height="9" viewBox="0 0 10 9"><circle cx="4.200" cy="1.300" r="0.900" fill="none" stroke="#444" stroke-width="0.600"/><path d="M0.600 3.200H7.800M4.200 3.200V5.400M4.200 5.400L2.200 8.400M4.200 5.400L5.400 7" stroke="#444" stroke-width="0.700" fill="none"/><path d="M6.400 6.200L9.200 8.800M9.200 6.200L6.400 8.800" stroke="#444" stroke-width="0.700"/></svg>
<div class="t" style="left:329.70px;top:534.00px;font-size:7.30px;color:#444;letter-spacing:-0.212px;">Accessibility: Investigate</div>
<svg style="left:719.60px;top:533.00px;" width="10" height="8.5" viewBox="0 0 10 8.5"><rect x="0.400" y="0.400" width="8.800" height="5.800" fill="none" stroke="#444" stroke-width="0.700"/><path d="M2.600 8H5" stroke="#444" stroke-width="0.700"/><circle cx="6.800" cy="6" r="1.700" fill="#F3F3F3" stroke="#444" stroke-width="0.700"/></svg>
<div class="t" style="left:730.80px;top:534.00px;font-size:7.30px;color:#444;letter-spacing:-0.240px;">Display Settings</div>
<svg style="left:791.50px;top:532.50px;" width="9.5" height="9" viewBox="0 0 9.5 9"><path d="M0.400 2.400V.400H2.400M7 .400H9V2.400M9 6.600V8.600H7M2.400 8.600H.400V6.600" fill="none" stroke="#444" stroke-width="0.700"/><path d="M2.800 2.200H5.400L6.600 3.400V6.800H2.800z" fill="none" stroke="#444" stroke-width="0.700"/></svg>
<div class="t" style="left:802.40px;top:534.00px;font-size:7.30px;color:#444;letter-spacing:-0.516px;">Focus</div>
<svg style="left:837.90px;top:532.80px;" width="7.8" height="8" viewBox="0 0 7.8 8"><path d="M0.400.800H3.200L3.900 1.500L4.600.800H7.400V7H4.600L3.900 7.700L3.200 7H.400z" fill="none" stroke="#444" stroke-width="0.700"/><path d="M3.900 1.500V7.700" stroke="#444" stroke-width="0.600"/></svg>
<div class="a" style="left:855.20px;top:530.30px;width:25.10px;height:11.80px;background:#D2D2D2;"></div>
<svg style="left:863.70px;top:532.20px;" width="8.2" height="9" viewBox="0 0 8.2 9"><rect x="0.600" y="0.500" width="7" height="8" fill="#fff" stroke="#555" stroke-width="0.800"/><path d="M2 2.500H6.200M2 4.200H6.200M2 5.900H6.200" stroke="#777" stroke-width="0.600"/></svg>
<svg style="left:890.30px;top:532.50px;" width="10" height="9" viewBox="0 0 10 9"><rect x="0.400" y="0.400" width="7.200" height="8" fill="none" stroke="#444" stroke-width="0.700"/><path d="M0.400 2.200H7.600" stroke="#444" stroke-width="0.700"/><circle cx="7.200" cy="6.200" r="2.200" fill="#444"/></svg>
<div class="a" style="left:912.20px;top:536.30px;width:5.40px;height:0.80px;background:#555;"></div>
<div class="a" style="left:920.70px;top:536.40px;width:66.70px;height:0.70px;background:#9a9a9a;"></div>
<div class="a" style="left:953.40px;top:534.80px;width:0.70px;height:3.80px;background:#9a9a9a;"></div>
<div class="a" style="left:935.20px;top:532.50px;width:2.60px;height:8.40px;background:#444;"></div>
<div class="a" style="left:990.00px;top:536.30px;width:5.40px;height:0.80px;background:#555;"></div>
<div class="a" style="left:992.30px;top:534.00px;width:0.80px;height:5.40px;background:#555;"></div>
<div class="t" style="left:1004.00px;top:534.00px;font-size:7.30px;color:#444;letter-spacing:-0.604px;">50%</div>
</div></body></html>
